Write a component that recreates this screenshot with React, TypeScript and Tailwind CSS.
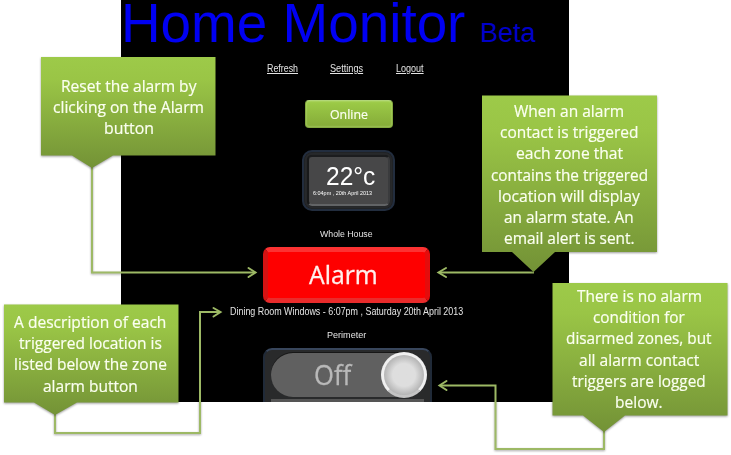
import { useLayoutEffect, useRef } from "react";

// Squeezes or stretches one line of text to the width of its box.
function FitText({ text, className }: { text: string; className: string }) {
  const box = useRef<HTMLDivElement>(null);
  const line = useRef<HTMLSpanElement>(null);
  useLayoutEffect(() => {
    if (box.current && line.current) {
      const ratio = box.current.clientWidth / line.current.offsetWidth;
      line.current.style.transform = `scaleX(${ratio})`;
    }
  });
  return (
    <div ref={box} className={`shrink-0 whitespace-nowrap ${className}`}>
      <span ref={line} className="inline-block origin-left [text-decoration:inherit]">
        {text}
      </span>
    </div>
  );
}

type Line = { text: string; size: string };

function Callout({
  lines,
  place,
  boxClass,
  points,
  id,
}: {
  lines: Line[];
  place: string;
  boxClass: string;
  points: string;
  id: string;
}) {
  return (
    <div className={`absolute ${place}`}>
      <svg className="absolute inset-0 h-full w-full overflow-visible drop-shadow-[0_1px_1px_rgba(0,0,0,0.4)]">
        <defs>
          <linearGradient id={id} x1="0" y1="0" x2="0" y2="1">
            <stop offset="0" stopColor="#9dca49" />
            <stop offset="0.2" stopColor="#9ac546" />
            <stop offset="1" stopColor="#739236" />
          </linearGradient>
        </defs>
        <polygon points={points} fill={`url(#${id})`} />
      </svg>
      <div
        className={`relative flex flex-col items-center font-['Open_Sans','Noto_Sans',sans-serif] text-[16.5px] leading-[21.2px] text-[#fbfff0] [-webkit-text-stroke:0.2px_#fbfff0] ${boxClass}`}
      >
        {lines.map((l) => (
          <FitText key={l.text} text={l.text} className={l.size} />
        ))}
      </div>
    </div>
  );
}

function Connectors() {
  return (
    <svg
      className="pointer-events-none absolute inset-0 h-[455px] w-[731px] drop-shadow-[0_1px_1px_rgba(0,0,0,0.35)]"
      viewBox="0 0 731 455"
      fill="none"
      stroke="#9db965"
      strokeWidth="2"
    >
      <path d="M92 166V272.5H255" />
      <path d="M248.5 268L255.5 272.5L248.5 277" strokeLinecap="round" />
      <path d="M534 272.5H439" />
      <path d="M446 268L438.5 272.5L446 277" strokeLinecap="round" />
      <path d="M55 414V433H200V312H219" />
      <path d="M213.5 308L220.5 312L213.5 316.5" strokeLinecap="round" />
      <path d="M604 431V449H495.5V385.5H440" />
      <path d="M446.5 381L439.5 385.5L446.5 390" strokeLinecap="round" />
    </svg>
  );
}

function MonitorScreen() {
  return (
    <main className="ml-[121px] flex h-[402px] w-[448px] flex-col overflow-hidden bg-black text-[#e4e4e4]">
      <h1 className="flex h-[63px] shrink-0 items-baseline gap-[14px] leading-[47px]">
        <FitText text="Home Monitor" className="w-[344px] text-[55px] text-[#0000f2]" />
        <FitText text="Beta" className="ml-px w-[56px] text-[27px] text-[#0000c8]" />
      </h1>
      <nav className="flex h-[37px] shrink-0 pl-[146px] text-[10px] leading-3">
        <FitText text="Refresh" className="w-[31px] underline" />
        <FitText text="Settings" className="ml-8 w-[33px] underline" />
        <FitText text="Logout" className="ml-[33px] w-[28px] underline" />
      </nav>
      <button className="ml-[184px] flex h-7 w-[88px] shrink-0 justify-center rounded-[4px] border border-[#84aa3f] border-t-[#b3d779] bg-gradient-to-b from-[#9dcc48] to-[#85ab38] font-['Open_Sans',sans-serif] text-[13px] leading-[26px] text-[#fbfff0] shadow-[inset_0_0_2px_#c6e58e] [-webkit-text-stroke:0.2px_#fbfff0]">
        <FitText text="Online" className="w-[38px]" />
      </button>
      <section className="mt-[22px] ml-[181px] h-[61px] w-[93px] shrink-0 rounded-[10px] border-2 border-[#222d3e] bg-[#303235] p-[3px] shadow-[inset_0_0_3px_#08090b]">
        <div className="h-[51px] rounded-[5px] border-2 border-t-[#1b1c1e] border-r-[#3a3b3d] border-b-[#626466] border-l-[#18191a] bg-[#474748] text-white shadow-[0_0_2px_#111]">
          <FitText text="22°c" className="mt-[6px] ml-[17px] h-[27px] w-[49px] text-[25.5px] leading-[27px]" />
          <FitText text="6:04pm , 20th April 2013" className="ml-[4px] w-[59px] text-[6px] leading-[7px]" />
        </div>
      </section>
      <FitText text="Whole House" className="mt-[17px] ml-[199px] h-3 w-[53px] text-[9.75px] leading-3" />
      <button className="mt-[7px] ml-[142px] flex h-[56px] w-[167px] shrink-0 rounded-[7px] border-[5px] border-t-[#fc3232] border-r-[#e50c0c] border-b-[#e92b2b] border-l-[#d51212] bg-[#fe0000] pl-[41px] font-['Open_Sans',sans-serif] text-[25.5px] leading-[44px] text-[#fff0ed] shadow-[inset_0_0_2px_#ff0000] [-webkit-text-stroke:0.3px_#fff0ed]">
        <FitText text="Alarm" className="w-[69px]" />
      </button>
      <FitText
        text="Dining Room Windows - 6:07pm , Saturday 20th April 2013"
        className="mt-[3px] ml-[109px] h-3 w-[233px] text-[10px] leading-3"
      />
      <FitText text="Perimeter" className="mt-[11px] ml-[206px] h-3 w-[39px] text-[9.75px] leading-3" />
      <section className="mt-[7px] ml-[142px] h-[66px] w-[169px] shrink-0 rounded-t-[9px] border-2 border-[#202a38] border-t-[#38465c] bg-[#292a2b] px-1.5 pt-[3px]">
        <div className="flex h-[44px] items-center justify-between rounded-l-full rounded-r-full bg-[#606060] pl-[43px] font-['Open_Sans',sans-serif] text-[27px] leading-[44px] text-[#b9b9b9] shadow-[0_-1px_0_#171717] [-webkit-text-stroke:0.3px_#b9b9b9]">
          <FitText text="Off" className="w-[37px]" />
          <div className="-mr-[3px] size-[46px] shrink-0 rounded-full border-[3px] border-[#f0f0f0] border-b-[#c4c4c4] bg-radial from-[#dedede] from-40% to-[#b3b3b3] to-72%" />
        </div>
        <div className="mt-[2px] h-2 bg-[#555]" />
      </section>
    </main>
  );
}

export default function App() {
  return (
    <div className="relative h-[455px] w-[731px] overflow-hidden bg-white font-['Liberation_Sans',Arial,sans-serif]">
      <MonitorScreen />
      <Connectors />
      <Callout
        id="reset"
        place="left-[41px] top-[57px] h-[111px] w-[175px]"
        points="0,0 174.5,0 174.5,98.5 72,98.5 51,111 31,98.5 0,98.5"
        boxClass="pt-[18px]"
        lines={[
          { text: "Reset the alarm by", size: "w-[135px]" },
          { text: "clicking on the Alarm", size: "w-[151px]" },
          { text: "button", size: "w-[50px]" },
        ]}
      />
      <Callout
        id="triggered"
        place="left-[482px] top-[95px] h-[178px] w-[175px]"
        points="0,0.5 175,0.5 175,157 73,157 51.5,177 30,157 0,157"
        boxClass="pt-[5px] pr-px"
        lines={[
          { text: "When an alarm", size: "w-[110px]" },
          { text: "contact is triggered", size: "w-[138px]" },
          { text: "each zone that", size: "w-[107px]" },
          { text: "contains the triggered", size: "w-[157px]" },
          { text: "location will display", size: "w-[142px]" },
          { text: "an alarm state. An", size: "w-[130px]" },
          { text: "email alert is sent.", size: "w-[131px]" },
        ]}
      />
      <Callout
        id="description"
        place="left-[4px] top-[304px] h-[111px] w-[175px]"
        points="0,0.5 174.5,0.5 174.5,98.5 73,98.5 51,111 30,98.5 0,98.5"
        boxClass="pt-[7px] pr-[3px]"
        lines={[
          { text: "A description of each", size: "w-[152px]" },
          { text: "triggered location is", size: "w-[143px]" },
          { text: "listed below the zone", size: "w-[153px]" },
          { text: "alarm button", size: "w-[95px]" },
        ]}
      />
      <Callout
        id="disarmed"
        place="left-[552px] top-[283px] h-[149px] w-[176px]"
        points="0.5,0 175.5,0 175.5,132.5 73,132.5 52,149 31,132.5 0.5,132.5"
        boxClass="pt-[2px] pr-[2px]"
        lines={[
          { text: "There is no alarm", size: "w-[125px]" },
          { text: "condition for", size: "w-[92px]" },
          { text: "disarmed zones, but", size: "w-[146px]" },
          { text: "all alarm contact", size: "w-[120px]" },
          { text: "triggers are logged", size: "w-[134px]" },
          { text: "below.", size: "w-[48px]" },
        ]}
      />
    </div>
  );
}
